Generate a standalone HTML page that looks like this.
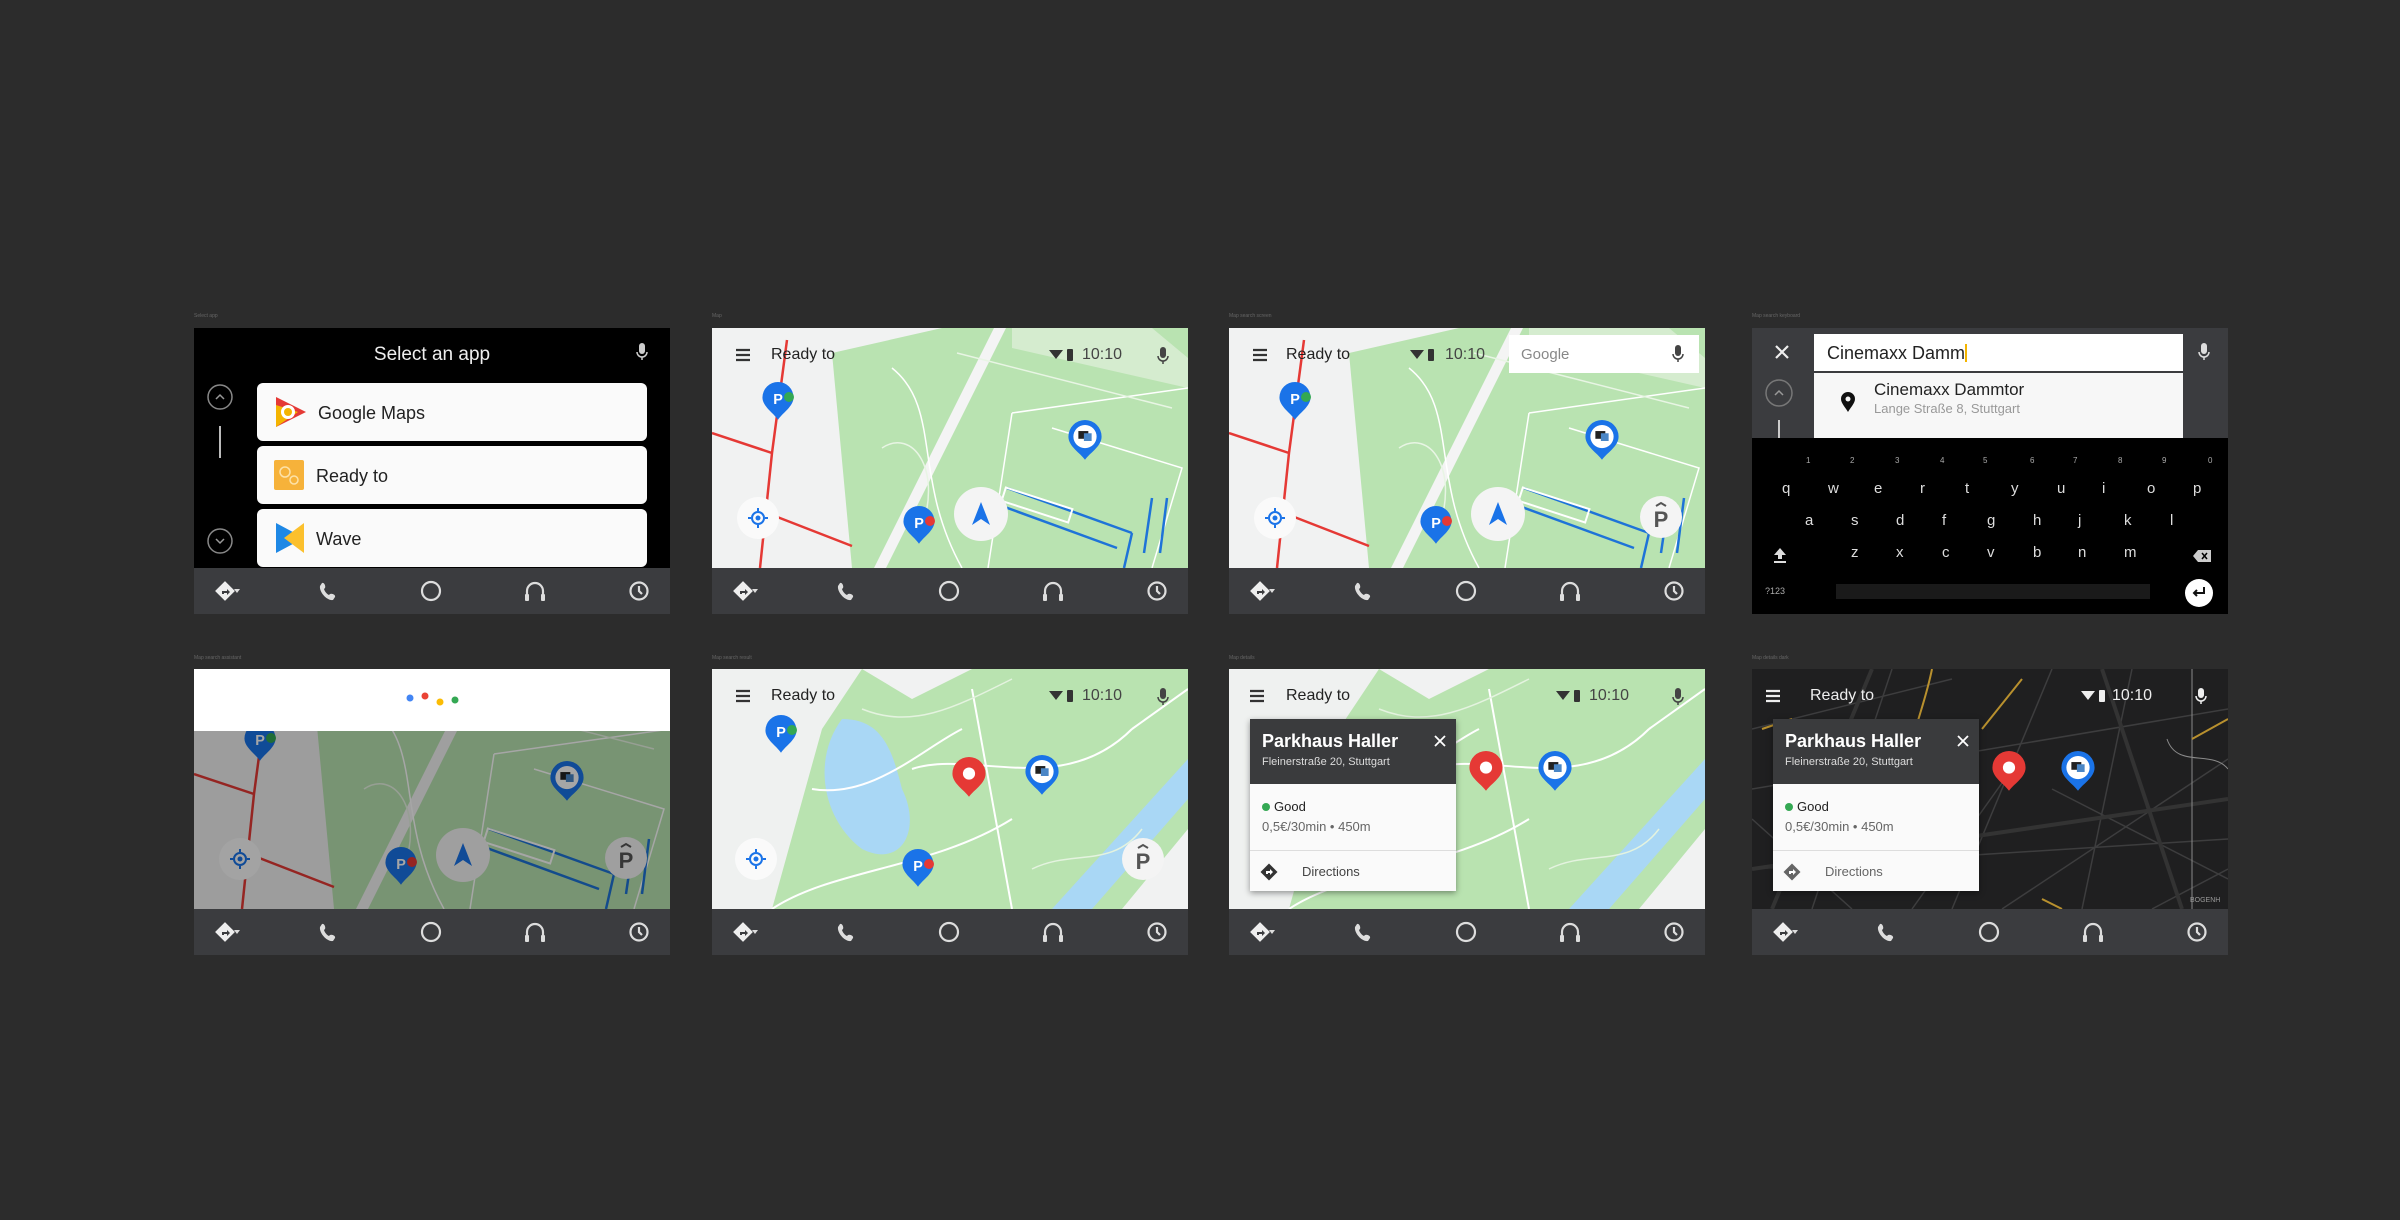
<!DOCTYPE html>
<html><head><meta charset="utf-8">
<style>
html,body{margin:0;padding:0}
body{width:2400px;height:1220px;background:#2c2c2c;position:relative;overflow:hidden;font-family:"Liberation Sans",sans-serif}
.scr{position:absolute;width:476px;height:286px;overflow:hidden;background:#000}
.scr>svg.map{position:absolute;left:0;top:0}
.bar{position:absolute;left:0;top:240px;width:476px;height:46px;background:#3b3c3f}
.lbl{position:absolute;font-size:5px;color:#666}
.abs{position:absolute}
.tb{position:absolute;top:18px;font-size:16px;color:#222}
.card{position:absolute;left:21px;top:50px;width:206px;height:172px;background:#fafafa;box-shadow:0 2px 6px rgba(0,0,0,.4)}
.card .hd{height:65px;background:#3a3b3d;color:#fff;position:relative}
</style></head><body>
<svg width="0" height="0" style="position:absolute">
<defs>
<symbol id="bar" viewBox="0 0 476 46">
 <g fill="none" stroke="#ddd" stroke-width="2.2">
  <circle cx="237" cy="23" r="9"/>
  <path d="M333 30v-7a8 8 0 0 1 16 0v7"/>
  <circle cx="445" cy="23" r="8.5"/>
  <path d="M445 18v5l3 3"/>
 </g>
 <rect x="24" y="16" width="14" height="14" transform="rotate(45 31 23)" fill="#eee"/>
 <path d="M28 26v-3h5v-2l3 3-3 3v-2h-3v1z" fill="#3b3c3f"/>
 <path d="M40 21h6l-3 4z" fill="#ddd"/>
 <rect x="331" y="26" width="4" height="7" rx="1" fill="#ddd"/><rect x="347" y="26" width="4" height="7" rx="1" fill="#ddd"/>
 <path d="M128 15c2-1 4 3 3 5l-1 1c1 3 3 5 5 6l1-1c2-1 6 1 5 3l-2 3c-6 1-14-8-13-14z" fill="#ddd"/>
</symbol>
<symbol id="pinP" viewBox="-16 -32 32 36">
 <path d="M0 2C-4-4-14-10-14-18A14 14 0 1 1 14-18C14-10 4-4 0 2Z" fill="#1a73e8"/>
 <text x="0" y="-12" font-size="13" font-family="Liberation Sans" font-weight="bold" fill="#fff" text-anchor="middle">P</text>
</symbol>
<symbol id="pinC" viewBox="-16 -34 32 38">
 <path d="M0 2C-4-4-15-10-15-19A15 15 0 1 1 15-19C15-10 4-4 0 2Z" fill="#1a73e8"/>
 <circle cx="0" cy="-19" r="10.5" fill="#fff"/>
 <rect x="-6" y="-24" width="9" height="7" fill="#222"/><rect x="-1" y="-22" width="7" height="7" fill="#4a86c6"/>
</symbol>
<symbol id="pinR" viewBox="-16 -34 32 38">
 <path d="M0 2C-4-4-15-10-15-19A15 15 0 1 1 15-19C15-10 4-4 0 2Z" fill="#e53935"/>
 <circle cx="0" cy="-19" r="5.5" fill="#fff"/>
</symbol>
<symbol id="map1" viewBox="0 0 476 240">
 <rect width="476" height="240" fill="#f1f2f2"/>
 <path d="M120 25 L230 0 L476 0 L476 240 L140 240 Z" fill="#b9e3b1"/>
 <path d="M300 0 L440 0 L476 30 L476 60 L300 20Z" fill="#d5eccf"/>
 <path d="M282 0 L294 0 L174 240 L162 240Z" fill="#f4f4f4"/>
 <path d="M300 85 L476 60 M300 85 L276 240 M180 40 C230 80 200 150 250 240 M340 100 L470 140 L440 240" stroke="#fff" stroke-width="1.5" fill="none"/>
 <path d="M245 25 L460 80 M170 120 C200 100 230 140 210 200" stroke="#e8f5e4" stroke-width="1.5" fill="none"/>
 <path d="M0 105 L60 125 L75 12 M60 125 L48 240 M55 185 L140 218" stroke="#e53935" stroke-width="2.5" fill="none"/>
 <path d="M295 160 L420 205 M290 178 L405 220 M420 205 L412 240 M440 170 L432 225 M455 170 L448 225" stroke="#1e73d8" stroke-width="2.5" fill="none"/>
 <rect x="290" y="170" width="70" height="14" fill="none" stroke="#fff" stroke-width="2" transform="rotate(18 325 177)"/>
</symbol>
<symbol id="map2" viewBox="0 0 476 240">
 <rect width="476" height="240" fill="#b9e3b0"/>
 <path d="M0 0 L150 0 L110 60 L60 240 L0 240Z" fill="#eff1f0"/>
 <path d="M150 0 L260 0 L200 30Z" fill="#f1f2f2"/>
 <path d="M130 50 C100 90 110 150 150 180 C190 200 210 160 190 120 C180 80 170 50 130 50Z" fill="#a9d7f5"/>
 <path d="M476 90 L476 130 L380 240 L340 240Z" fill="#a9d7f5"/>
 <path d="M410 240 L476 160 L476 240Z" fill="#f1f2f2"/>
 <path d="M60 240 C120 200 220 200 300 150 M200 100 C260 80 350 130 420 60 M260 20 L300 240 M420 60 L476 20 M100 120 C160 130 210 80 250 60" stroke="#fff" stroke-width="2" fill="none"/>
 <path d="M150 40 C200 60 240 40 300 10 M320 200 C360 180 400 200 430 160" stroke="#e4f3df" stroke-width="1.5" fill="none"/>
</symbol>
<symbol id="map3" viewBox="0 0 476 240">
 <rect width="476" height="240" fill="#1f1f20"/>
 <path d="M0 60 L200 10 M0 120 L476 40 M60 240 L140 0 M200 240 L300 0 M330 240 L380 0 M250 240 L476 90 M0 200 L476 170 M400 240 L476 200 M100 240 L0 150 M300 120 L476 210 M160 240 L260 100" stroke="#3d3d3e" stroke-width="1.5" fill="none"/>
 <path d="M0 200 L476 130 M120 0 L20 240 M350 0 L430 240" stroke="#333" stroke-width="4" fill="none"/>
 <path d="M440 0 L440 240 M415 70 C425 100 460 80 476 100" stroke="#8a8a8a" stroke-width="1" fill="none"/>
 <path d="M180 0 C170 50 150 80 160 120 M270 10 L230 60 M290 230 L310 240 M440 70 L476 50" stroke="#b8902e" stroke-width="2" fill="none"/>
 <path d="M10 60 L40 50" stroke="#b8902e" stroke-width="2"/>
</symbol>
<symbol id="loc" viewBox="-22 -22 44 44">
 <circle r="21" fill="#fafafa"/>
 <circle r="6" fill="none" stroke="#1a73e8" stroke-width="2"/><circle r="2.5" fill="#1a73e8"/>
 <path d="M0-10v3M0 10v-3M-10 0h3M10 0h-3" stroke="#1a73e8" stroke-width="2"/>
</symbol>
<symbol id="navb" viewBox="-28 -28 56 56">
 <circle r="27" fill="#f4f4f4"/>
 <path d="M0-12 L9 11 L0 5 L-9 11Z" fill="#1a73e8"/>
</symbol>
<symbol id="pbtn" viewBox="-22 -22 44 44">
 <circle r="21" fill="#f4f4f4"/>
 <text x="0" y="10" font-size="22" font-family="Liberation Sans" font-weight="bold" fill="#555" text-anchor="middle">P</text>
 <path d="M-5-11 L0-14 L5-11" stroke="#555" stroke-width="2" fill="none"/>
</symbol>
<symbol id="ham" viewBox="0 0 60 54">
 <path d="M24 22h14M24 27h14M24 32h14" stroke="#333" stroke-width="2.2"/>
</symbol>
<symbol id="stat" viewBox="0 0 30 54">
 <path d="M1 22 L15 22 L8 31Z" fill="#333"/>
 <rect x="19" y="21" width="6" height="12" rx="1" fill="#333"/>
</symbol>
<symbol id="mic" viewBox="0 0 16 22">
 <rect x="5" y="1" width="6" height="11" rx="3" fill="#444"/><path d="M3 10a5 5 0 0 0 10 0M8 15v3" stroke="#444" stroke-width="1.5" fill="none"/>
</symbol>
</defs>
</svg>

<div class="lbl" style="left:194px;top:313px">Select app</div>
<div class="lbl" style="left:712px;top:313px">Map</div>
<div class="lbl" style="left:1229px;top:313px">Map search screen</div>
<div class="lbl" style="left:1752px;top:313px">Map search keyboard</div>
<div class="lbl" style="left:194px;top:655px">Map search assistant</div>
<div class="lbl" style="left:712px;top:655px">Map search result</div>
<div class="lbl" style="left:1229px;top:655px">Map details</div>
<div class="lbl" style="left:1752px;top:655px">Map details dark</div>

<!-- Screen 1 -->
<div class="scr" style="left:194px;top:328px;background:#000">
 <div class="abs" style="left:0;width:476px;top:16px;text-align:center;color:#eee;font-size:19px">Select an app</div>
 <svg class="abs" style="left:440px;top:14px" width="16" height="22"><rect x="5" y="1" width="6" height="11" rx="3" fill="#ccc"/><path d="M3 10a5 5 0 0 0 10 0M8 15v3" stroke="#ccc" stroke-width="1.5" fill="none"/></svg>
 <svg class="abs" style="left:12px;top:56px" width="30" height="190">
  <circle cx="14" cy="13" r="12" fill="none" stroke="#888" stroke-width="1.5"/><path d="M10 15l4-4 4 4" stroke="#999" stroke-width="1.5" fill="none"/>
  <rect x="13" y="42" width="2" height="32" fill="#bbb"/>
  <circle cx="14" cy="157" r="12" fill="none" stroke="#888" stroke-width="1.5"/><path d="M10 155l4 4 4-4" stroke="#999" stroke-width="1.5" fill="none"/>
 </svg>
 <div class="abs" style="left:63px;top:55px;width:390px;height:58px;background:#fafafa;border-radius:6px"></div>
 <div class="abs" style="left:63px;top:118px;width:390px;height:58px;background:#fafafa;border-radius:6px"></div>
 <div class="abs" style="left:63px;top:181px;width:390px;height:58px;background:#fafafa;border-radius:6px"></div>
 <svg class="abs" style="left:80px;top:67px" width="34" height="34"><path d="M2 2 L32 17 L2 32Z" fill="#e53935"/><path d="M2 10 L24 17 L2 32Z" fill="#f4b400"/><circle cx="14" cy="17" r="7" fill="#fff"/><circle cx="14" cy="17" r="4" fill="#f4b400"/></svg>
 <div class="abs" style="left:124px;top:75px;font-size:18px;color:#222">Google Maps</div>
 <svg class="abs" style="left:80px;top:132px" width="30" height="30"><rect width="30" height="30" rx="2" fill="#f6b23a"/><circle cx="11" cy="12" r="5" fill="none" stroke="#fde2a8" stroke-width="1.5"/><circle cx="20" cy="20" r="4" fill="none" stroke="#fde2a8" stroke-width="1.5"/></svg>
 <div class="abs" style="left:122px;top:138px;font-size:18px;color:#222">Ready to</div>
 <svg class="abs" style="left:80px;top:193px" width="32" height="34"><path d="M2 2 L30 17 L2 32Z" fill="#1e88e5"/><path d="M30 2 L10 17 L30 32Z" fill="#fbc02d"/></svg>
 <div class="abs" style="left:122px;top:201px;font-size:18px;color:#222">Wave</div>
 <svg class="bar" viewBox="0 0 476 46"><use href="#bar"/></svg>
</div>

<!-- Screen 2 -->
<div class="scr" style="left:712px;top:328px">
 <svg class="map" width="476" height="240"><use href="#map1"/>
  <use href="#pinP" x="48" y="54" width="36" height="40"/><circle cx="77" cy="69" r="5" fill="#34a853"/>
  <use href="#pinP" x="189" y="178" width="36" height="40"/><circle cx="218" cy="193" r="5" fill="#e53935"/>
  <use href="#pinC" x="355" y="92" width="36" height="42"/>
  <use href="#loc" x="24" y="168" width="44" height="44"/>
  <use href="#navb" x="241" y="158" width="56" height="56"/>
  <use href="#ham" x="0" y="0" width="60" height="54"/>
  <use href="#stat" x="336" y="0" width="30" height="54"/>
  <use href="#mic" x="443" y="18" width="16" height="22"/>
 </svg>
 <div class="tb" style="left:59px">Ready to</div>
 <div class="tb" style="left:370px;color:#444">10:10</div>
 <svg class="bar" viewBox="0 0 476 46"><use href="#bar"/></svg>
</div>

<!-- Screen 3 -->
<div class="scr" style="left:1229px;top:328px">
 <svg class="map" width="476" height="240"><use href="#map1"/>
  <use href="#pinP" x="48" y="54" width="36" height="40"/><circle cx="77" cy="69" r="5" fill="#34a853"/>
  <use href="#pinP" x="189" y="178" width="36" height="40"/><circle cx="218" cy="193" r="5" fill="#e53935"/>
  <use href="#pinC" x="355" y="92" width="36" height="42"/>
  <use href="#loc" x="24" y="168" width="44" height="44"/>
  <use href="#navb" x="241" y="158" width="56" height="56"/>
  <use href="#pbtn" x="410" y="167" width="44" height="44"/>
  <use href="#ham" x="0" y="0" width="60" height="54"/>
  <use href="#stat" x="180" y="0" width="30" height="54"/>
  <rect x="280" y="7" width="190" height="38" fill="#fff"/>
  <use href="#mic" x="441" y="16" width="16" height="22"/>
 </svg>
 <div class="tb" style="left:57px">Ready to</div>
 <div class="tb" style="left:216px;color:#444">10:10</div>
 <div class="tb" style="left:292px;top:18px;color:#888;font-size:15px">Google</div>
 <svg class="bar" viewBox="0 0 476 46"><use href="#bar"/></svg>
</div>

<!-- Screen 4 -->
<div class="scr" style="left:1752px;top:328px;background:#3b3c3f">
 <svg class="abs" style="left:20px;top:14px" width="20" height="20"><path d="M4 4l12 12M16 4L4 16" stroke="#eee" stroke-width="2.2"/></svg>
 <div class="abs" style="left:62px;top:6px;width:369px;height:37px;background:#fff"></div>
 <div class="abs" style="left:75px;top:15px;font-size:18px;color:#222">Cinemaxx Damm<span style="display:inline-block;width:2px;height:18px;background:#f4b400;vertical-align:-3px"></span></div>
 <svg class="abs" style="left:444px;top:14px" width="16" height="22"><rect x="5" y="1" width="6" height="11" rx="3" fill="#ddd"/><path d="M3 10a5 5 0 0 0 10 0M8 15v3" stroke="#ddd" stroke-width="1.5" fill="none"/></svg>
 <svg class="abs" style="left:12px;top:50px" width="30" height="60"><circle cx="15" cy="15" r="13" fill="none" stroke="#777" stroke-width="1.5"/><path d="M11 17l4-4 4 4" stroke="#999" stroke-width="1.5" fill="none"/><rect x="14" y="42" width="2" height="18" fill="#ccc"/></svg>
 <div class="abs" style="left:62px;top:45px;width:369px;height:65px;background:#f7f7f7"></div>
 <svg class="abs" style="left:88px;top:63px" width="16" height="22"><path d="M8 21C5 16 1 12 1 8a7 7 0 0 1 14 0c0 4-4 8-7 13z" fill="#111"/><circle cx="8" cy="8" r="2.5" fill="#f7f7f7"/></svg>
 <div class="abs" style="left:122px;top:52px;font-size:17px;color:#222">Cinemaxx Dammtor</div>
 <div class="abs" style="left:122px;top:73px;font-size:13px;color:#999">Lange Straße 8, Stuttgart</div>
 <div class="abs" style="left:0;top:110px;width:476px;height:176px;background:#000"></div>
 <div class="abs" style="left:0;top:128px;width:476px;font-size:8px;color:#aaa">
  <span class="abs" style="left:54px">1</span><span class="abs" style="left:98px">2</span><span class="abs" style="left:143px">3</span><span class="abs" style="left:188px">4</span><span class="abs" style="left:231px">5</span><span class="abs" style="left:278px">6</span><span class="abs" style="left:321px">7</span><span class="abs" style="left:366px">8</span><span class="abs" style="left:410px">9</span><span class="abs" style="left:456px">0</span>
 </div>
 <div class="abs" style="left:0;top:152px;width:476px;font-size:15px;color:#ddd">
  <span class="abs" style="left:30px">q</span><span class="abs" style="left:76px">w</span><span class="abs" style="left:122px">e</span><span class="abs" style="left:168px">r</span><span class="abs" style="left:213px">t</span><span class="abs" style="left:259px">y</span><span class="abs" style="left:305px">u</span><span class="abs" style="left:350px">i</span><span class="abs" style="left:395px">o</span><span class="abs" style="left:441px">p</span>
 </div>
 <div class="abs" style="left:0;top:184px;width:476px;font-size:15px;color:#ddd">
  <span class="abs" style="left:53px">a</span><span class="abs" style="left:99px">s</span><span class="abs" style="left:144px">d</span><span class="abs" style="left:190px">f</span><span class="abs" style="left:235px">g</span><span class="abs" style="left:281px">h</span><span class="abs" style="left:326px">j</span><span class="abs" style="left:372px">k</span><span class="abs" style="left:418px">l</span>
 </div>
 <div class="abs" style="left:0;top:216px;width:476px;font-size:15px;color:#ddd">
  <span class="abs" style="left:99px">z</span><span class="abs" style="left:144px">x</span><span class="abs" style="left:190px">c</span><span class="abs" style="left:235px">v</span><span class="abs" style="left:281px">b</span><span class="abs" style="left:326px">n</span><span class="abs" style="left:372px">m</span>
 </div>
 <svg class="abs" style="left:20px;top:218px" width="16" height="18"><path d="M8 2L14 9H10V13H6V9H2Z" fill="#ddd"/><rect x="2" y="15" width="12" height="2" fill="#ddd"/></svg>
 <svg class="abs" style="left:440px;top:220px" width="20" height="16"><path d="M6 2H19V14H6L1 8Z" fill="#ccc"/><path d="M10 5l5 6M15 5l-5 6" stroke="#000" stroke-width="1.5"/></svg>
 <div class="abs" style="left:13px;top:258px;font-size:9px;color:#aaa">?123</div>
 <div class="abs" style="left:84px;top:256px;width:314px;height:15px;background:#1a1a1a"></div>
 <svg class="abs" style="left:432px;top:250px" width="30" height="30"><circle cx="15" cy="15" r="14" fill="#fff"/><path d="M20 9v6H10M13 12l-3 3 3 3" stroke="#111" stroke-width="2" fill="none"/></svg>
</div>

<!-- Screen 5 -->
<div class="scr" style="left:194px;top:669px">
 <svg class="map" width="476" height="240"><use href="#map1"/>
  <use href="#pinP" x="48" y="54" width="36" height="40"/><circle cx="77" cy="69" r="5" fill="#34a853"/>
  <use href="#pinP" x="189" y="178" width="36" height="40"/><circle cx="218" cy="193" r="5" fill="#e53935"/>
  <use href="#pinC" x="355" y="92" width="36" height="42"/>
  <use href="#loc" x="24" y="168" width="44" height="44"/>
  <use href="#navb" x="241" y="158" width="56" height="56"/>
  <use href="#pbtn" x="410" y="167" width="44" height="44"/>
  <rect width="476" height="240" fill="rgba(0,0,0,0.35)"/>
  <rect width="476" height="62" fill="#fff"/>
  <circle cx="216" cy="29" r="3.5" fill="#4285f4"/><circle cx="231" cy="27" r="3.5" fill="#ea4335"/><circle cx="246" cy="33" r="3.5" fill="#fbbc05"/><circle cx="261" cy="31" r="3.5" fill="#34a853"/>
 </svg>
 <svg class="bar" viewBox="0 0 476 46"><use href="#bar"/></svg>
</div>

<!-- Screen 6 -->
<div class="scr" style="left:712px;top:669px">
 <svg class="map" width="476" height="240"><use href="#map2"/>
  <use href="#pinP" x="51" y="46" width="36" height="40"/><circle cx="80" cy="61" r="5" fill="#34a853"/>
  <use href="#pinP" x="188" y="180" width="36" height="40"/><circle cx="217" cy="195" r="5" fill="#e53935"/>
  <use href="#pinR" x="239" y="88" width="36" height="42"/>
  <use href="#pinC" x="312" y="86" width="36" height="42"/>
  <use href="#loc" x="22" y="168" width="44" height="44"/>
  <use href="#pbtn" x="409" y="168" width="44" height="44"/>
  <use href="#ham" x="0" y="0" width="60" height="54"/>
  <use href="#stat" x="336" y="0" width="30" height="54"/>
  <use href="#mic" x="443" y="18" width="16" height="22"/>
 </svg>
 <div class="tb" style="left:59px">Ready to</div>
 <div class="tb" style="left:370px;color:#444">10:10</div>
 <svg class="bar" viewBox="0 0 476 46"><use href="#bar"/></svg>
</div>

<!-- Screen 7 -->
<div class="scr" style="left:1229px;top:669px">
 <svg class="map" width="476" height="240"><use href="#map2"/>
  <use href="#pinP" x="188" y="180" width="36" height="40"/>
  <use href="#pinR" x="239" y="82" width="36" height="42"/>
  <use href="#pinC" x="308" y="82" width="36" height="42"/>
  <use href="#ham" x="-3" y="0" width="60" height="54"/>
  <use href="#stat" x="326" y="0" width="30" height="54"/>
  <use href="#mic" x="441" y="18" width="16" height="22"/>
 </svg>
 <div class="tb" style="left:57px">Ready to</div>
 <div class="tb" style="left:360px;color:#444">10:10</div>
 <div class="card">
  <div class="hd"><div class="abs" style="left:12px;top:12px;font-size:18px;font-weight:bold">Parkhaus Haller</div>
   <div class="abs" style="left:12px;top:37px;font-size:11px;color:#ddd">Fleinerstraße 20, Stuttgart</div>
   <svg class="abs" style="left:183px;top:15px" width="14" height="14"><path d="M2 2l10 10M12 2L2 12" stroke="#fff" stroke-width="1.8"/></svg></div>
  <div class="abs" style="left:12px;top:80px;font-size:13px;color:#222"><span style="display:inline-block;width:8px;height:8px;border-radius:50%;background:#34a853;margin-right:4px"></span>Good</div>
  <div class="abs" style="left:12px;top:100px;font-size:13px;color:#666">0,5€/30min • 450m</div>
  <div class="abs" style="left:0;top:131px;width:206px;height:1px;background:#ddd"></div>
  <svg class="abs" style="left:10px;top:144px" width="18" height="18"><rect x="3" y="3" width="12" height="12" transform="rotate(45 9 9)" fill="#333"/><path d="M6 11V8h4V6l3 3-3 3v-2H8v1z" fill="#fff"/></svg>
  <div class="abs" style="left:52px;top:145px;font-size:13px;color:#444">Directions</div>
 </div>
 <svg class="bar" viewBox="0 0 476 46"><use href="#bar"/></svg>
</div>

<!-- Screen 8 -->
<div class="scr" style="left:1752px;top:669px">
 <svg class="map" width="476" height="240"><use href="#map3"/>
  <use href="#pinP" x="177" y="182" width="36" height="40"/>
  <use href="#pinR" x="239" y="82" width="36" height="42"/>
  <use href="#pinC" x="308" y="82" width="36" height="42"/>
  <path d="M14 22h14M14 27h14M14 32h14" stroke="#eee" stroke-width="2.2"/>
  <path d="M329 22 L343 22 L336 31Z" fill="#eee"/><rect x="347" y="21" width="6" height="12" rx="1" fill="#eee"/>
  <rect x="446" y="19" width="6" height="10" rx="3" fill="#eee"/><path d="M444 27a5 5 0 0 0 10 0M449 32v3" stroke="#eee" stroke-width="1.5" fill="none"/>
  <text x="438" y="233" font-size="7" fill="#999" font-family="Liberation Sans">BOGENH</text>
 </svg>
 <div class="tb" style="left:58px;color:#eee">Ready to</div>
 <div class="tb" style="left:360px;color:#eee">10:10</div>
 <div class="card">
  <div class="hd"><div class="abs" style="left:12px;top:12px;font-size:18px;font-weight:bold">Parkhaus Haller</div>
   <div class="abs" style="left:12px;top:37px;font-size:11px;color:#ddd">Fleinerstraße 20, Stuttgart</div>
   <svg class="abs" style="left:183px;top:15px" width="14" height="14"><path d="M2 2l10 10M12 2L2 12" stroke="#fff" stroke-width="1.8"/></svg></div>
  <div class="abs" style="left:12px;top:80px;font-size:13px;color:#222"><span style="display:inline-block;width:8px;height:8px;border-radius:50%;background:#34a853;margin-right:4px"></span>Good</div>
  <div class="abs" style="left:12px;top:100px;font-size:13px;color:#666">0,5€/30min • 450m</div>
  <div class="abs" style="left:0;top:131px;width:206px;height:1px;background:#ddd"></div>
  <svg class="abs" style="left:10px;top:144px" width="18" height="18"><rect x="3" y="3" width="12" height="12" transform="rotate(45 9 9)" fill="#666"/><path d="M6 11V8h4V6l3 3-3 3v-2H8v1z" fill="#fff"/></svg>
  <div class="abs" style="left:52px;top:145px;font-size:13px;color:#666">Directions</div>
 </div>
 <svg class="bar" viewBox="0 0 476 46"><use href="#bar"/></svg>
</div>
</body></html>
